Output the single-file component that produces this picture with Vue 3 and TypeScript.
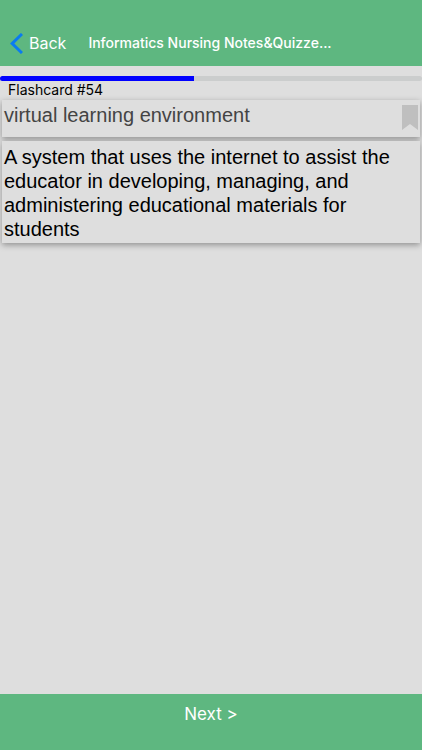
<script setup lang="ts">
import { ref } from 'vue'

const cardNumber = ref(54)
const progress = ref(46)
const term = 'virtual learning environment'
const definition =
  'A system that uses the internet to assist the educator in developing, managing, and administering educational materials for students'
</script>

<template>
  <div class="screen">
    <header class="bar">
      <button class="back" type="button">
        <svg class="chevron" viewBox="0 0 13 21" aria-hidden="true">
          <path d="M12 1 2.2 10.5 12 20" />
        </svg>
        <span>Back</span>
      </button>
      <h1 class="title">Informatics Nursing Notes&amp;Quizze...</h1>
    </header>
    <main class="content">
      <div class="track"><div class="fill" :style="{ width: progress + '%' }"></div></div>
      <p class="count">Flashcard #{{ cardNumber }}</p>
      <section class="card term">
        <h2>{{ term }}</h2>
        <button class="bookmark" type="button" aria-label="Bookmark">
          <svg viewBox="0 0 16 25" aria-hidden="true"><path d="M0 0h16v25l-8-6-8 6z" /></svg>
        </button>
      </section>
      <section class="card definition">
        <p>{{ definition }}</p>
      </section>
    </main>
    <button class="next" type="button">Next &gt;</button>
  </div>
</template>

<style>
body {
  margin: 0;
}
</style>

<style scoped>
.screen {
  display: flex;
  flex-direction: column;
  min-height: 100vh;
  background: #dedede;
  color: #000;
  font-family: Inter, "Liberation Sans", sans-serif;
}
button {
  margin: 0;
  padding: 0;
  border: 0;
  background: none;
  font-family: inherit;
}
h1,
h2,
p {
  margin: 0;
  font-weight: 400;
}
.bar {
  display: flex;
  align-items: center;
  gap: 22px;
  padding: 20px 10px 0;
  height: 46px;
  background: #5eb780;
  color: #fff;
}
.back {
  display: flex;
  align-items: center;
  gap: 6px;
  color: #fff;
  font-size: 16px;
  line-height: 24px;
}
.chevron {
  width: 13px;
  height: 21px;
  fill: none;
  stroke: #0a7bf0;
  stroke-width: 3;
}
.title {
  font-size: 14px;
  line-height: 20px;
  font-weight: 500;
  white-space: nowrap;
}
.content {
  flex: 1;
  padding-top: 10px;
}
.track {
  height: 5px;
  border-radius: 3px;
  background: #cbcdcd;
}
.fill {
  height: 5px;
  border-radius: 3px 0 0 3px;
  background: #00f;
}
.count {
  padding: 0 8px;
  font-size: 14px;
  line-height: 17px;
}
.card {
  margin: 2px 2px 0;
  padding: 0 2px;
  background: #dedede;
  box-shadow: 0 2px 6px rgba(0, 0, 0, 0.35);
  font-family: "Liberation Sans", Arial, sans-serif;
  font-size: 20px;
  line-height: 24px;
}
.term {
  display: flex;
  align-items: flex-start;
  justify-content: space-between;
  height: 37px;
  color: #444;
}
.term h2 {
  padding-top: 3px;
  font-size: 20px;
}
.bookmark {
  padding-top: 5px;
}
.bookmark svg {
  display: block;
  width: 16px;
  height: 25px;
  fill: #bfbfbf;
}
.definition {
  margin-top: 4px;
  padding: 4px 2px 2px;
}
.next {
  height: 56px;
  padding-bottom: 16px;
  background: #5eb780;
  color: #fff;
  font-size: 17px;
  line-height: 24px;
}
</style>
